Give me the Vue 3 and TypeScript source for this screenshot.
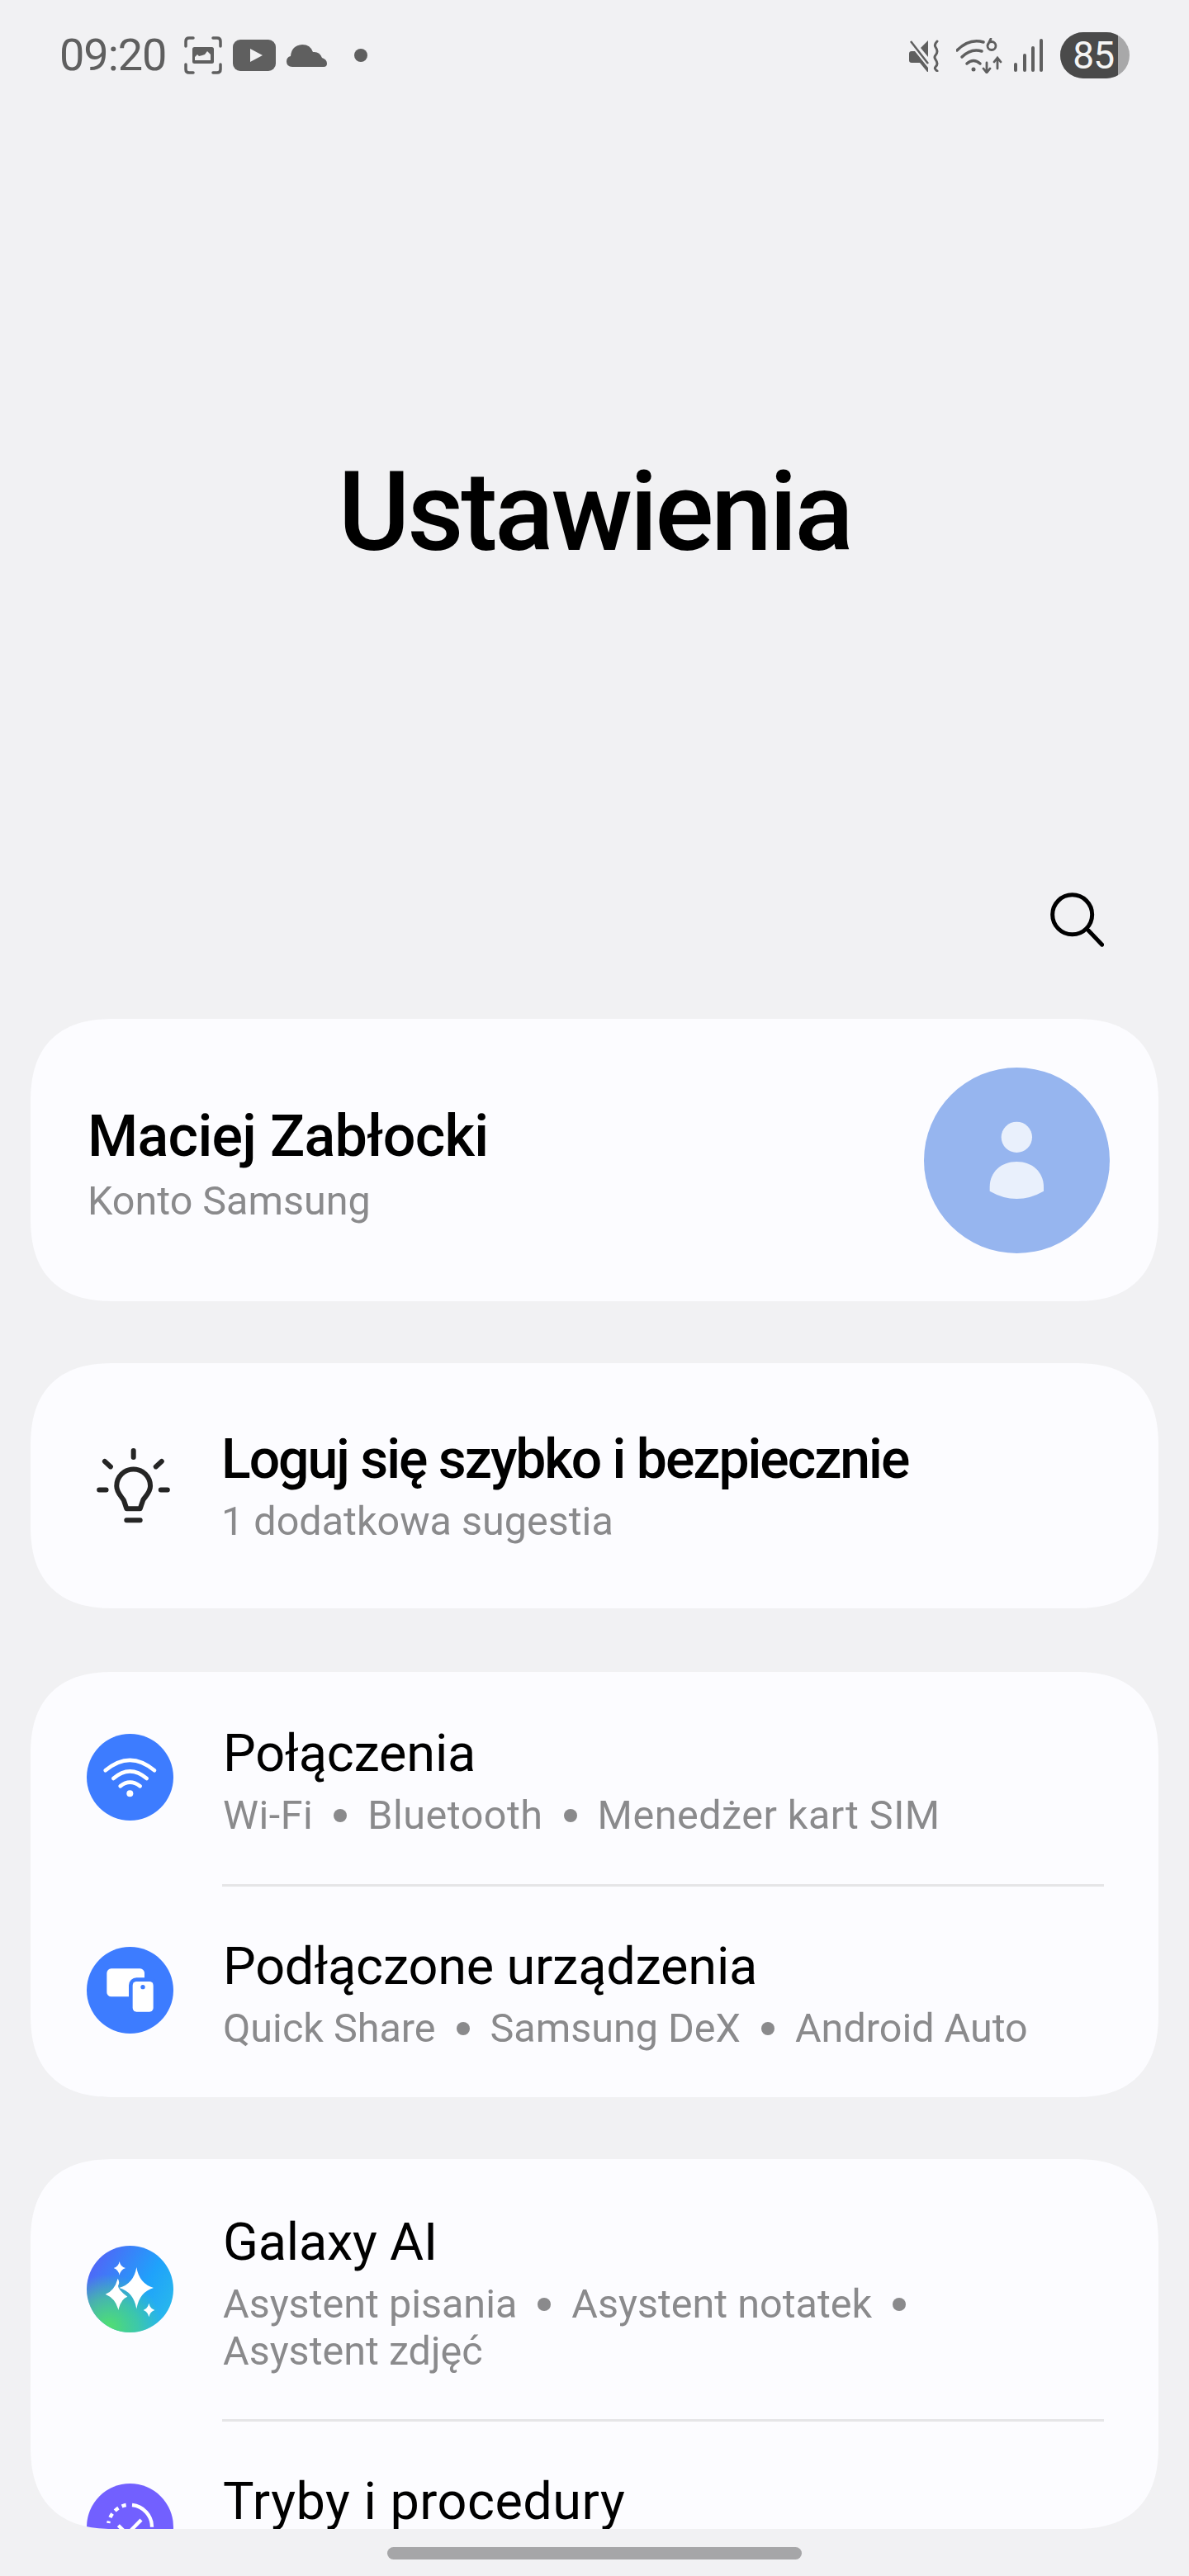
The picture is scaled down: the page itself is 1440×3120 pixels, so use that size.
<script setup lang="ts">
// podsumowania wierszy listy ustawień
const connectionSubs = ['Wi-Fi', 'Bluetooth', 'Menedżer kart SIM']
const deviceSubs = ['Quick Share', 'Samsung DeX', 'Android Auto']
</script>

<template>
  <div class="screen">
    <div class="status">
      <div class="status-left">
        <span class="time">09:20</span>
        <svg class="ic-shot" viewBox="0 0 46 46">
          <g fill="none" stroke="#5f5f5f" stroke-width="3.5" stroke-linecap="round">
            <path d="M2 12V6Q2 2 6 2h5M35 2h5q4 0 4 4v6M44 34v6q0 4-4 4h-5M11 44H6q-4 0-4-4v-6" />
          </g>
          <rect x="10" y="13" width="26" height="20" rx="2.5" fill="#5f5f5f" />
          <path d="M13 29v-4l3-3 2 2 4-1 3-1 3-4 4 4v7z" fill="#f1f1f3" />
        </svg>
        <svg class="ic-yt" viewBox="0 0 52 38">
          <rect width="52" height="38" rx="9" fill="#5f5f5f" />
          <path d="M21 11l15 8-15 8z" fill="#f1f1f3" />
        </svg>
        <svg class="ic-cloud" viewBox="0 0 49 27">
          <path d="M7 27Q0 27 0 20.500Q0 15 5 14Q6 1 19 0Q29 0 32 9Q40 8 43 16Q49 18 49 23Q49 27 45 27Z" fill="#5f5f5f" />
        </svg>
        <span class="dot"></span>
      </div>
      <div class="status-right">
        <svg class="ic-mute" viewBox="0 0 38 39">
          <path d="M0 17q0-3 3-3h4l16 20v5l-1 0-9-11H3q-3 0-3-3z" fill="#5f5f5f" />
          <path d="M14 10l9-9v20z" fill="#5f5f5f" />
          <path d="M2 2l21 27" stroke="#5f5f5f" stroke-width="2.500" fill="none" />
          <path d="M34 2q-4 4-2 7t2 5q0 3-2 5t0 5 2 5q0 2-2 4t2 5" stroke="#5f5f5f" stroke-width="3" fill="none" stroke-linecap="round" />
        </svg>
        <svg class="ic-wifi" viewBox="0 0 58 43">
          <g fill="none" stroke="#5f5f5f" stroke-linecap="round">
            <path d="M1 15Q16 0 33 5" stroke-width="3.500" />
            <path d="M7 23Q18 12 31 16" stroke-width="3.500" />
            <path d="M13 31Q21 24 29 31" stroke-width="3.500" />
            <path d="M37 30v11M33 37l4 5 4-5M50 25v12M46 29l4-5 4 5" stroke-width="2.800" />
            <path d="M42 1l-4 8M38 9.500a5 5 0 1 0 10 0a5 5 0 1 0-10 0" stroke-width="2.800" />
          </g>
          <circle cx="21" cy="38" r="2.500" fill="#5f5f5f" />
        </svg>
        <svg class="ic-signal" viewBox="0 0 37 40">
          <g stroke="#5f5f5f" stroke-width="4" stroke-linecap="round">
            <path d="M2 31v7M13 20v18M23 11v27M33 2v36" />
          </g>
        </svg>
        <div class="battery"><span class="battery-num">85</span></div>
      </div>
    </div>

    <div class="hero"><h1>Ustawienia</h1></div>

    <div class="search-row">
      <svg class="ic-search" viewBox="697 123 195 197">
        <circle cx="777" cy="203" r="72" fill="none" stroke="#000" stroke-width="15" />
        <path d="M835 260l50 52" fill="none" stroke="#000" stroke-width="15" stroke-linecap="round" />
      </svg>
    </div>

    <section class="card account">
      <div class="account-text">
        <div class="account-name">Maciej Zabłocki</div>
        <div class="sub">Konto Samsung</div>
      </div>
      <svg class="avatar" viewBox="234 756 675 675">
        <circle cx="571.500" cy="1093.500" r="337.500" fill="#96b5ef" />
        <circle cx="571" cy="1009" r="56" fill="#e9f0fc" />
        <path d="M473 1205V1190C473 1135 515 1098 571 1098C627 1098 669 1135 669 1190V1205Q620 1233 571 1233Q522 1233 473 1205Z" fill="#e9f0fc" />
      </svg>
    </section>

    <section class="card suggestion">
      <svg class="ic-bulb" viewBox="172 153 265 272">
        <g fill="none" stroke="#252525" stroke-width="18" stroke-linecap="round" stroke-linejoin="round">
          <path d="M305 162v24M201 201l21 19M407 201l-21 19M181 304h25M404 304h24M280 414h49" />
          <path d="M280 372H329L340 340C345 330 366 315 366 290A61 61 0 0 0 244 290C244 315 262 328 270 342Z" />
        </g>
      </svg>
      <div class="suggestion-text">
        <div class="suggestion-title">Loguj się szybko i bezpiecznie</div>
        <div class="sub">1 dodatkowa sugestia</div>
      </div>
    </section>

    <section class="card group-a">
      <div class="row">
        <svg class="round" viewBox="135 120 315 315">
          <circle cx="292.500" cy="277.500" r="157.500" fill="#3d7cff" />
          <g fill="none" stroke="#fff" stroke-width="14" stroke-linecap="round">
            <path d="M203 253Q292 178 381 253" />
            <path d="M232 282Q292 230 353 282" />
            <path d="M257 310Q292 282 329 310" />
          </g>
          <circle cx="292" cy="337" r="12" fill="#fff" />
        </svg>
        <div class="row-text">
          <div class="row-title">Połączenia</div>
          <div class="sub sub-wide">
            <template v-for="(s, i) in connectionSubs" :key="s">
              <span v-if="i" class="sep"></span>{{ s }}
            </template>
          </div>
        </div>
      </div>
      <div class="divider"></div>
      <div class="row">
        <svg class="round" viewBox="135 894 315 315">
          <circle cx="292.500" cy="1051.500" r="157.500" fill="#3d7cff" />
          <rect x="208" y="973" width="137" height="102" rx="16" fill="#fff" />
          <rect x="288" y="1006" width="103" height="138" rx="28" fill="#3d7cff" />
          <rect x="302" y="1020" width="75" height="110" rx="14" fill="#fff" />
          <circle cx="339" cy="1040" r="8" fill="#3d7cff" />
        </svg>
        <div class="row-text">
          <div class="row-title">Podłączone urządzenia</div>
          <div class="sub">
            <template v-for="(s, i) in deviceSubs" :key="s">
              <span v-if="i" class="sep"></span>{{ s }}
            </template>
          </div>
        </div>
      </div>
    </section>

    <section class="card group-b">
      <div class="row row-tall">
        <svg class="round" viewBox="135 120 315 315">
          <defs>
            <linearGradient id="ai-base" x1="0" y1="0" x2="1" y2="0.6">
              <stop offset="0" stop-color="#5b58f6" />
              <stop offset="0.7" stop-color="#1fa2fb" />
              <stop offset="1" stop-color="#27b5ee" />
            </linearGradient>
            <radialGradient id="ai-green" cx="0.25" cy="0.95" r="0.62">
              <stop offset="0" stop-color="#52e06e" />
              <stop offset="0.55" stop-color="#52e06e" stop-opacity="0.55" />
              <stop offset="1" stop-color="#52e06e" stop-opacity="0" />
            </radialGradient>
          </defs>
          <circle cx="292.500" cy="277.500" r="157.500" fill="url(#ai-base)" />
          <circle cx="292.500" cy="277.500" r="157.500" fill="url(#ai-green)" />
          <g fill="#fff">
            <path d="M316 198Q326 258 378 273Q326 288 316 350Q306 288 253 273Q306 258 316 198Z" />
            <path d="M254 177Q258 197 276 201Q258 207 254 227Q250 207 233 201Q250 197 254 177Z" />
            <path d="M361 329Q365 349 382 354Q365 359 361 379Q357 359 341 354Q357 349 361 329Z" />
            <path d="M248 239Q256 252 250 263Q244 276 283 305Q260 312 250 354Q241 312 203 296Q236 284 248 239Z" />
          </g>
        </svg>
        <div class="row-text">
          <div class="row-title">Galaxy AI</div>
          <div class="sub ai-sub">
            Asystent pisania<span class="sep"></span>Asystent notatek<span class="sep"></span><br />Asystent zdjęć
          </div>
        </div>
      </div>
      <div class="divider"></div>
      <div class="row">
        <svg class="round" viewBox="135 978 315 315">
          <circle cx="292.500" cy="1135.500" r="157.500" fill="#7260ff" />
          <g fill="none" stroke="#fff" stroke-width="13">
            <path d="M300 1056A80 80 0 0 1 372 1136" />
            <path d="M278 1056A80 80 0 0 0 214 1122" stroke-dasharray="16 14" />
            <path d="M250 1130L282 1162L333 1110" />
          </g>
        </svg>
        <div class="row-text row-text-clipped">
          <div class="row-title">Tryby i procedury</div>
        </div>
      </div>
    </section>

    <div class="nav-bar"><span class="handle"></span></div>
  </div>
</template>

<style>
html,
body {
  margin: 0;
  background: #f1f1f3;
}
</style>

<style scoped>
.screen {
  width: 1440px;
  height: 3120px;
  overflow: hidden;
  display: flex;
  flex-direction: column;
  background: #f1f1f3;
  font-family: 'Roboto', 'Noto Sans', sans-serif;
  color: #000;
}

/* pasek stanu */
.status {
  height: 134px;
  flex: none;
  box-sizing: border-box;
  padding: 0 72px;
  display: flex;
  justify-content: space-between;
  align-items: center;
}

.status-left,
.status-right {
  display: flex;
  align-items: center;
}

.time {
  width: 128px;
  font-size: 54px;
  line-height: 1;
  letter-spacing: -1px;
  color: #5f5f5f;
  margin-right: 23px;
}

.ic-shot {
  width: 46px;
  height: 46px;
  margin-right: 13px;
}

.ic-yt {
  width: 52px;
  height: 38px;
  margin-right: 13px;
}

.ic-cloud {
  width: 49px;
  height: 27px;
  margin-right: 33px;
}

.dot {
  width: 16px;
  height: 16px;
  border-radius: 50%;
  background: #5f5f5f;
}

.ic-mute {
  width: 38px;
  height: 39px;
  margin-right: 19px;
}

.ic-wifi {
  width: 58px;
  height: 43px;
  margin-right: 12px;
}

.ic-signal {
  width: 37px;
  height: 40px;
  margin-right: 19px;
}

.battery {
  width: 84px;
  height: 56px;
  border-radius: 28px;
  overflow: hidden;
  background: #a8a8a9;
}

.battery-num {
  display: flex;
  align-items: center;
  justify-content: flex-end;
  box-sizing: border-box;
  padding-right: 5px;
  width: 70px;
  height: 56px;
  background: #4a4a4a;
  color: #f5f5f5;
  font-size: 46px;
  letter-spacing: -1px;
}

/* nagłówek */
.hero {
  height: 922px;
  flex: none;
  padding-top: 25px;
  display: flex;
  align-items: center;
  justify-content: center;
}

.hero h1 {
  margin: 0;
  font-size: 133px;
  font-weight: 500;
  line-height: 1;
  letter-spacing: -3.4px;
}

.search-row {
  flex: none;
  display: flex;
  justify-content: flex-end;
  padding-right: 103px;
  margin-bottom: 87px;
}

.ic-search {
  width: 65px;
  height: 66px;
}

/* karty */
.card {
  flex: none;
  margin: 0 37px;
  background: #fcfcff;
  border-radius: 102px;
  corner-shape: superellipse(1.3);
}

.account {
  height: 342px;
  margin-bottom: 75px;
  box-sizing: border-box;
  padding: 0 59px 0 69px;
  display: flex;
  align-items: center;
  justify-content: space-between;
}

.account-text {
  padding-top: 6px;
}

.account-name {
  font-size: 70px;
  font-weight: 500;
  line-height: 88px;
  letter-spacing: -0.7px;
  margin-bottom: 6px;
}

.avatar {
  width: 225px;
  height: 225px;
}

.suggestion {
  height: 297px;
  margin-bottom: 77px;
  box-sizing: border-box;
  padding-left: 80px;
  display: flex;
  align-items: center;
}

.ic-bulb {
  width: 89px;
  height: 91px;
  margin-right: 62px;
}

.suggestion-title {
  font-size: 66px;
  font-weight: 500;
  line-height: 80px;
  letter-spacing: -2px;
  margin-bottom: 6px;
}

.sub {
  font-size: 48.5px;
  line-height: 58px;
  color: #8a8a8c;
}

.sub-wide {
  letter-spacing: 0.5px;
}

.ai-sub {
  line-height: 57px;
}

.sep {
  display: inline-block;
  width: 16px;
  height: 16px;
  margin: 0 25px;
  border-radius: 50%;
  background: #8a8a8c;
  vertical-align: 8px;
}

.group-a {
  height: 515px;
  margin-bottom: 75px;
  overflow: hidden;
}

.group-a .divider {
  margin-top: 2px;
  margin-bottom: -2px;
}

.group-b {
  height: 448px;
  overflow: hidden;
}

.row {
  height: 255px;
  box-sizing: border-box;
  padding-left: 68px;
  display: flex;
  align-items: center;
}

.row-tall {
  height: 315px;
}

.round {
  width: 105px;
  height: 105px;
  flex: none;
  margin-right: 60px;
}

.row-text {
  padding-top: 6px;
}

.row-title {
  font-size: 63px;
  line-height: 80px;
  letter-spacing: -0.2px;
  margin-bottom: 6px;
}

.row-text-clipped {
  padding-bottom: 62px;
}

.row-text-clipped .row-title {
  letter-spacing: 0.5px;
}

.divider {
  height: 3px;
  margin: 0 66px 0 232px;
  background: #e5e5e7;
}

.nav-bar {
  flex: 1;
  display: flex;
  justify-content: center;
  padding-top: 22px;
}

.handle {
  width: 502px;
  height: 15px;
  border-radius: 8px;
  background: #a6a6a8;
}
</style>
